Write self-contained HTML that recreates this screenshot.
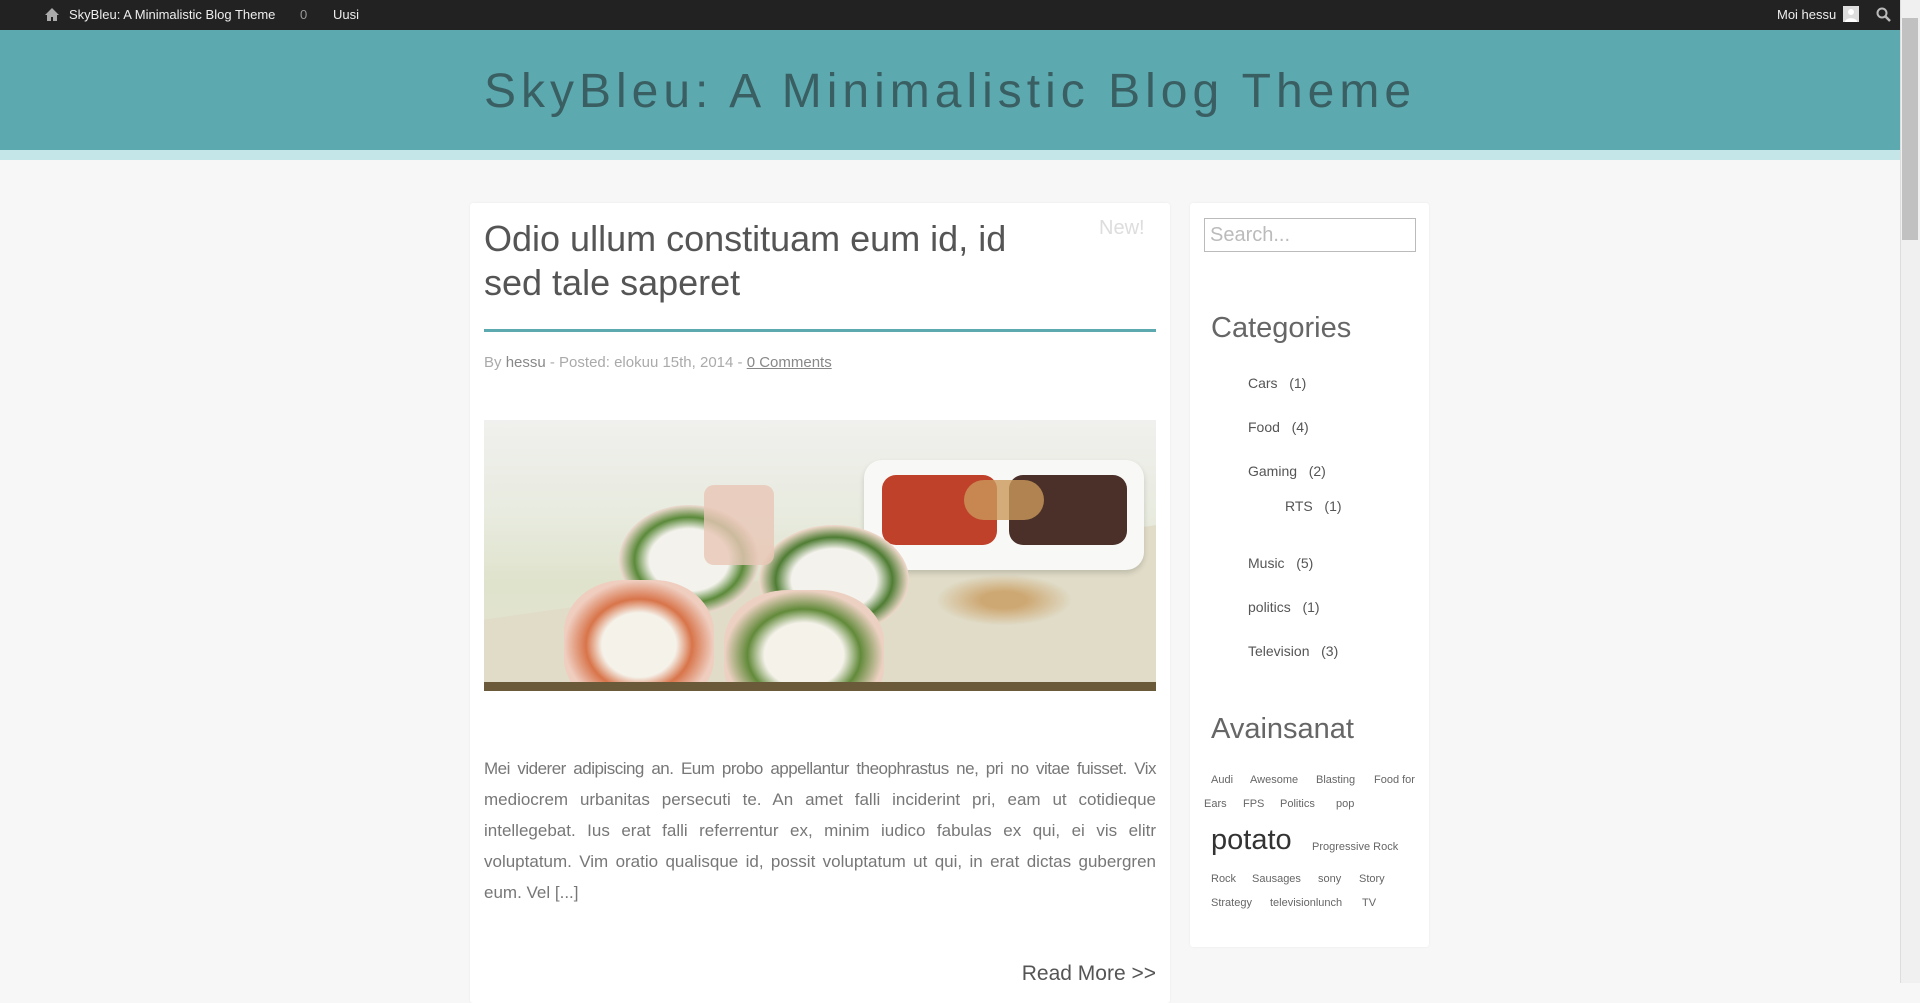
<!DOCTYPE html>
<html><head><meta charset="utf-8"><style>
*{margin:0;padding:0;box-sizing:border-box}
body{width:1920px;height:983px;overflow:hidden;background:#f7f7f7;font-family:"Liberation Sans",sans-serif;position:relative}
.abs{position:absolute}
#bar{left:0;top:0;width:1900px;height:30px;background:#222;color:#eee;font-size:13px}
#hdr{left:0;top:30px;width:1900px;height:120px;background:#5caab0}
#strip{left:0;top:150px;width:1900px;height:10px;background:#c4e6e8}
#sb{left:1900px;top:0;width:20px;height:983px;background:#f0f0f0;border-left:1px solid #ddd}
#thumb{left:1902px;top:18px;width:16px;height:222px;background:#c1c1c1}
.card{background:#fff;border-radius:3px;box-shadow:0 0 2px rgba(0,0,0,.06)}
.cat{font-size:14px;color:#555}
.tag{font-size:11px;color:#666}
.pl{height:31px;text-align:justify;text-align-last:justify;white-space:nowrap;overflow:visible}
.pl.j{white-space:normal}
</style></head><body>
<div id="bar" class="abs">
 <svg class="abs" style="left:44px;top:7px" width="16" height="15" viewBox="0 0 16 15"><path d="M8 1L1 8h2v6h4v-4h2v4h4V8h2z" fill="#aaa"/></svg>
 <span class="abs" style="left:69px;top:7px">SkyBleu: A Minimalistic Blog Theme</span>
 <span class="abs" style="left:300px;top:7px;color:#999">0</span>
 <span class="abs" style="left:333px;top:7px">Uusi</span>
 <span class="abs" style="left:1777px;top:7px">Moi hessu</span>
 <div class="abs" style="left:1843px;top:6px;width:16px;height:16px;background:#ddd"><svg width="16" height="16"><circle cx="8" cy="6" r="3" fill="#fff"/><path d="M2 16c0-5 12-5 12 0z" fill="#fff"/></svg></div>
 <svg class="abs" style="left:1876px;top:7px" width="16" height="16"><circle cx="6" cy="6" r="4.5" stroke="#bbb" stroke-width="2" fill="none"/><path d="M9.5 9.5L14 14" stroke="#bbb" stroke-width="2.5"/></svg>
</div>
<div id="hdr" class="abs"><div class="abs" style="left:0;width:1900px;top:34px;text-align:center;font-size:48px;letter-spacing:5px;color:#3a5f63">SkyBleu: A Minimalistic Blog Theme</div></div>
<div id="strip" class="abs"></div>
<div id="sb" class="abs"></div><div id="thumb" class="abs"></div>

<div class="abs card" style="left:470px;top:203px;width:700px;height:800px"></div>
<div class="abs" style="left:484px;top:217px;font-size:36px;line-height:44px;color:#555;width:560px">Odio ullum constituam eum id, id sed tale saperet</div>
<div class="abs" style="left:1099px;top:217px;font-size:20px;color:#ddd">New!</div>
<div class="abs" style="left:484px;top:329px;width:672px;height:3px;background:#5caab0"></div>
<div class="abs" style="left:484px;top:354px;font-size:15px;color:#aaa">By <span style="color:#888">hessu</span> - Posted: elokuu 15th, 2014 - <u style="color:#888">0 Comments</u></div>
<div class="abs" style="left:484px;top:420px;width:672px;height:271px;overflow:hidden;background:linear-gradient(180deg,#f0f0ee 0%,#e8ebdf 35%,#dfe3cc 60%,#e6e2d2 100%)">
 <div class="abs" style="left:-40px;top:150px;width:800px;height:200px;background:#e0dcc8;transform:rotate(-8deg)"></div>
 <div class="abs" style="left:380px;top:40px;width:280px;height:110px;border-radius:18px;background:#f8f8f6;box-shadow:0 3px 6px rgba(0,0,0,.15)"></div>
 <div class="abs" style="left:398px;top:55px;width:115px;height:70px;border-radius:14px;background:#c0412a"></div>
 <div class="abs" style="left:525px;top:55px;width:118px;height:70px;border-radius:14px;background:#4a3028"></div>
 <div class="abs" style="left:480px;top:60px;width:80px;height:40px;border-radius:20px;background:#c9995a;opacity:.8"></div>
 <div class="abs" style="left:135px;top:85px;width:140px;height:110px;border-radius:50%;background:radial-gradient(#f4f2ec 40%,#5b8a3a 55%,#e9d8cc 70%)"></div>
 <div class="abs" style="left:275px;top:105px;width:150px;height:110px;border-radius:50%;background:radial-gradient(#f4f2ec 40%,#4f7d34 55%,#ecd7c8 70%)"></div>
 <div class="abs" style="left:80px;top:160px;width:150px;height:130px;border-radius:40%;background:radial-gradient(#f5f2ea 35%,#d8744a 50%,#efcdbf 70%)"></div>
 <div class="abs" style="left:240px;top:170px;width:160px;height:130px;border-radius:40%;background:radial-gradient(#f5f2ea 35%,#628a3a 50%,#ecd1c2 70%)"></div>
 <div class="abs" style="left:220px;top:65px;width:70px;height:80px;background:#e9c7b6;border-radius:10px;opacity:.8"></div>
 <div class="abs" style="left:440px;top:150px;width:160px;height:60px;background:radial-gradient(#c6924f 20%,transparent 60%);opacity:.7"></div>
 <div class="abs" style="left:0;top:262px;width:672px;height:9px;background:#6a5a3a"></div>
</div>
<div class="abs" style="left:484px;top:753px;width:672px;font-size:17px;line-height:31px;color:#777">
<div class="pl" style="letter-spacing:-0.5px">Mei viderer adipiscing an. Eum probo appellantur theophrastus ne, pri no vitae fuisset. Vix</div>
<div class="pl">mediocrem urbanitas persecuti te. An amet falli inciderint pri, eam ut cotidieque</div>
<div class="pl">intellegebat. Ius erat falli referrentur ex, minim iudico fabulas ex qui, ei vis elitr</div>
<div class="pl">voluptatum. Vim oratio qualisque id, possit voluptatum ut qui, in erat dictas gubergren</div>
<div>eum. Vel [...]</div>
</div>
<div class="abs" style="left:956px;width:200px;top:962px;text-align:right;font-size:21px;color:#555">Read More &gt;&gt;</div>

<div class="abs card" style="left:1190px;top:203px;width:239px;height:744px"></div>
<div class="abs" style="left:1204px;top:218px;width:212px;height:34px;border:1px solid #bbb;font-size:20px;color:#bbb;padding:5px 5px">Search...</div>
<div class="abs" style="left:1211px;top:312px;font-size:29px;color:#666">Categories</div>
<div class="abs cat" style="left:1248px;top:375px">Cars&nbsp;&nbsp; (1)</div>
<div class="abs cat" style="left:1248px;top:419px">Food&nbsp;&nbsp; (4)</div>
<div class="abs cat" style="left:1248px;top:463px">Gaming&nbsp;&nbsp; (2)</div>
<div class="abs cat" style="left:1285px;top:498px">RTS&nbsp;&nbsp; (1)</div>
<div class="abs cat" style="left:1248px;top:555px">Music&nbsp;&nbsp; (5)</div>
<div class="abs cat" style="left:1248px;top:599px">politics&nbsp;&nbsp; (1)</div>
<div class="abs cat" style="left:1248px;top:643px">Television&nbsp;&nbsp; (3)</div>
<div class="abs" style="left:1211px;top:713px;font-size:29px;color:#666">Avainsanat</div>
<div class="abs tag" style="left:1211px;top:774px">Audi</div>
<div class="abs tag" style="left:1250px;top:774px">Awesome</div>
<div class="abs tag" style="left:1316px;top:774px">Blasting</div>
<div class="abs tag" style="left:1374px;top:774px">Food for</div>
<div class="abs tag" style="left:1204px;top:798px">Ears</div>
<div class="abs tag" style="left:1243px;top:798px">FPS</div>
<div class="abs tag" style="left:1280px;top:798px">Politics</div>
<div class="abs tag" style="left:1336px;top:798px">pop</div>
<div class="abs" style="left:1211px;top:824px;font-size:29px;color:#333">potato</div>
<div class="abs tag" style="left:1312px;top:841px">Progressive Rock</div>
<div class="abs tag" style="left:1211px;top:873px">Rock</div>
<div class="abs tag" style="left:1252px;top:873px">Sausages</div>
<div class="abs tag" style="left:1318px;top:873px">sony</div>
<div class="abs tag" style="left:1359px;top:873px">Story</div>
<div class="abs tag" style="left:1211px;top:897px">Strategy</div>
<div class="abs tag" style="left:1270px;top:897px">televisionlunch</div>
<div class="abs tag" style="left:1362px;top:897px">TV</div>
</body></html>
